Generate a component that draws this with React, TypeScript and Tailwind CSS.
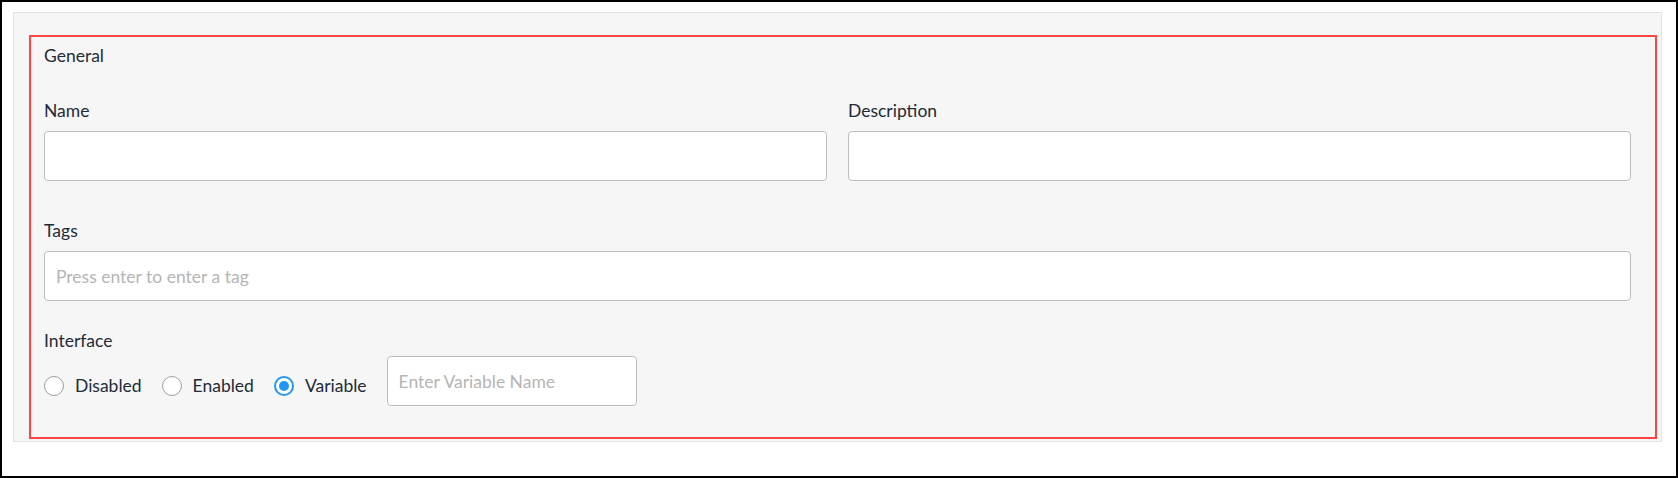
import { useState } from "react";

type Mode = "disabled" | "enabled" | "variable";

const options: { value: Mode; label: string }[] = [
  { value: "disabled", label: "Disabled" },
  { value: "enabled", label: "Enabled" },
  { value: "variable", label: "Variable" },
];

const inputClass =
  "h-[50px] w-full rounded-[4px] border border-[#bdbdbd] bg-white px-[11px] text-[17.5px] text-[#222b36] outline-none placeholder:text-[#b5b5b5]";

const Radio = ({ checked }: { checked: boolean }) =>
  checked ? (
    <span className="flex h-[20px] w-[20px] shrink-0 items-center justify-center rounded-full border-2 border-[#2196f3] bg-white">
      <span className="h-[10px] w-[10px] rounded-full bg-[#2196f3]" />
    </span>
  ) : (
    <span className="h-[20px] w-[20px] shrink-0 rounded-full border border-[#9e9e9e] bg-white" />
  );

const App = () => {
  const [mode, setMode] = useState<Mode>("variable");

  return (
    <div
      className="h-[478px] w-full border-2 border-black bg-white pl-[11px] pr-[14px] pt-[10px] text-[17.5px] leading-[24px] text-[#222b36]"
      style={{ fontFamily: "Lato, 'Noto Sans', sans-serif" }}
    >
      <div className="relative h-[430px] border border-[#e2e2e2] bg-[#f6f6f6] px-[30px] pt-[31px]">
        {/* highlight outline */}
        <div className="pointer-events-none absolute bottom-[2px] left-[15px] right-[4px] top-[22px] border-2 border-[#ff4444]" />

        <div>General</div>

        <div className="mt-[31px] grid grid-cols-2 gap-x-[21px]">
          <div>
            <label className="block">Name</label>
            <input className={`${inputClass} mt-[8px]`} />
          </div>
          <div>
            <label className="block">Description</label>
            <input className={`${inputClass} mt-[8px]`} />
          </div>
        </div>

        <div className="mt-[38px]">
          <label className="block">Tags</label>
          <input
            className={`${inputClass} mt-[8px]`}
            placeholder="Press enter to enter a tag"
          />
        </div>

        <div className="mt-[28px]">
          <label className="block">Interface</label>
          <div className="mt-[3px] flex items-start">
            <div className="flex gap-x-[20px] pt-[18px]">
              {options.map((opt) => (
                <button
                  key={opt.value}
                  type="button"
                  onClick={() => setMode(opt.value)}
                  className="flex h-[24px] items-center gap-x-[11px]"
                >
                  <Radio checked={mode === opt.value} />
                  <span>{opt.label}</span>
                </button>
              ))}
            </div>
            <input
              className={`${inputClass} ml-[20px] !w-[250px]`}
              placeholder="Enter Variable Name"
            />
          </div>
        </div>
      </div>
    </div>
  );
};

export default App;
